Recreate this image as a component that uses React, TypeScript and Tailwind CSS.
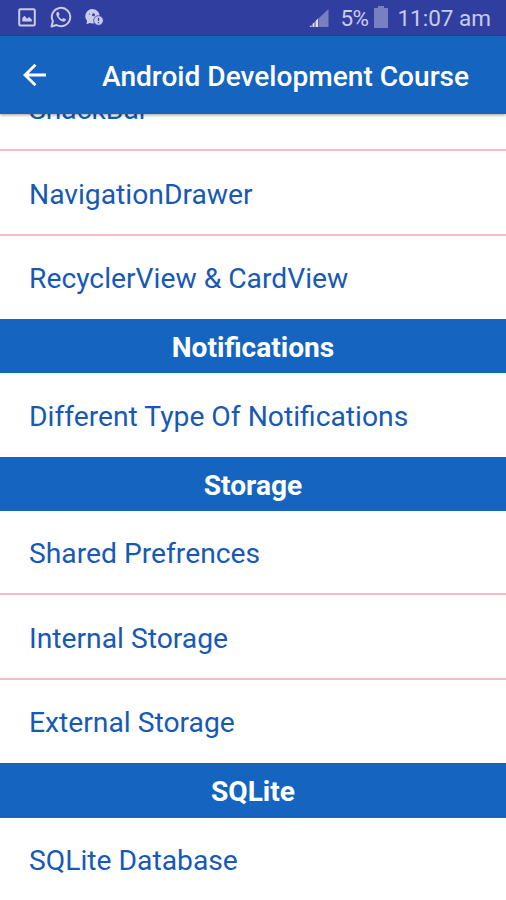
import React from "react";

const sections = [
  { title: "", items: ["SnackBar", "NavigationDrawer", "RecyclerView & CardView"] },
  { title: "Notifications", items: ["Different Type Of Notifications"] },
  { title: "Storage", items: ["Shared Prefrences", "Internal Storage", "External Storage"] },
  { title: "SQLite", items: ["SQLite Database"] },
];

const StatusBar: React.FC = () => {
  return (
    <div className="flex h-9 shrink-0 items-center bg-[#303f9f] pl-[18px] pr-[15px] text-[#c9cbec]">
      <svg className="-mt-0.5 h-[19px] w-[18px]" viewBox="0 0 18 19" fill="none">
        <rect x="1.2" y="1.2" width="15.6" height="16.2" rx="1.2" stroke="currentColor" strokeWidth="2" />
        <path d="M4.300 13.500V10l2.200-2.300 2.600 3 2-1.700 2.700 2.500v2z" fill="currentColor" />
      </svg>
      <svg className="-mt-0.5 ml-[14px] h-[22px] w-[22px]" viewBox="0 0 22 22" fill="none">
        <path
          d="M1.5 20.5l1.4-5.2a9.2 9.2 0 1 1 3.6 3.7z"
          stroke="currentColor"
          strokeWidth="2"
          strokeLinejoin="round"
        />
        <path
          d="M7.6 5.8c-1.5.7-1.6 2.5-.8 4.1 1.3 2.7 3.2 4.6 5.9 5.6 1.7.5 3.2-.5 3.3-2.2l-2.5-1.4-1.3 1.4c-1.7-.7-2.8-1.9-3.6-3.4l1-1.3-1.1-2.7z"
          fill="currentColor"
        />
      </svg>
      <svg className="-mt-0.5 ml-[12px] h-[18px] w-[20px]" viewBox="0 0 20 18">
        <path d="M8.5 1a7.6 7.2 0 1 1-2.8 14L2.5 16.2l.6-3.4A7.6 7.2 0 0 1 8.5 1z" fill="currentColor" />
        <circle cx="9.5" cy="6.8" r="1.5" fill="#303f9f" />
        <circle cx="5.5" cy="6" r="0.6" fill="#303f9f" />
        <circle cx="14.5" cy="12.5" r="4.8" fill="#c9cbec" stroke="#303f9f" strokeWidth="0.8" />
        <path d="M14.5 9.8v3.2M14.5 14v1.3" stroke="#303f9f" strokeWidth="1.3" />
      </svg>

      <svg className="-mt-px ml-auto h-[20px] w-[20px]" viewBox="0 0 20 20">
        <path d="M9.5 10.5L19.5 1v18h-10z" fill="#7780c1" />
        <path d="M0.5 19l2-2v2zM3.5 19v-3l2-2v5zM6.5 19v-6l2.5-2.5V19z" fill="#e4e5f7" />
      </svg>
      <span className="ml-[11px] w-[29px] whitespace-nowrap text-[22.5px] leading-none tracking-[-0.5px]">5%</span>
      <svg className="-mt-0.5 ml-[5px] h-[22px] w-[14px]" viewBox="0 0 14 22">
        <path d="M4 0h6v2h4v20H0V2h4z" fill="#7780c1" />
      </svg>
      <span className="ml-[9px] whitespace-nowrap text-[22.5px] leading-none">11:07 am</span>
    </div>
  );
};

const AppBar: React.FC = () => {
  return (
    <header className="relative z-10 flex h-[78px] shrink-0 items-center bg-[#1565c0] pl-[23px] text-white shadow-[0_1px_3px_rgba(0,0,0,0.4)]">
      <svg className="h-[24px] w-[24px]" viewBox="0 0 24 24" fill="none" stroke="currentColor" strokeWidth="2.8">
        <path d="M23 12H2M12.5 1.8L2 12l10.5 10.2" />
      </svg>
      <h1 className="ml-[55px] whitespace-nowrap pt-[5px] text-[28.1px] font-medium leading-none">
        Android Development Course
      </h1>
    </header>
  );
};

const App: React.FC = () => {
  return (
    <div className="flex h-[900px] w-full flex-col overflow-hidden bg-white font-[Roboto,sans-serif]">
      <StatusBar />
      <AppBar />
      <main className="min-h-0 flex-1 overflow-hidden">
        <div className="-mt-[47.5px]">
          {sections.map((section) => (
            <section key={section.title}>
              {section.title && (
                <h2 className="flex h-[54.2px] items-center justify-center bg-[#1565c0] pt-[4px] text-[28.1px] font-bold leading-none text-white">
                  {section.title}
                </h2>
              )}
              <ul>
                {section.items.map((item) => (
                  <li
                    key={item}
                    className="flex h-[84.5px] items-center border-b-2 border-[#f9b9cb] pl-[29px] pt-[5px] text-[28.25px] text-[#1759b5] last:h-[83.5px] last:border-b-0 last:pt-[4px]"
                  >
                    {item}
                  </li>
                ))}
              </ul>
            </section>
          ))}
        </div>
      </main>
    </div>
  );
};

export default App;
